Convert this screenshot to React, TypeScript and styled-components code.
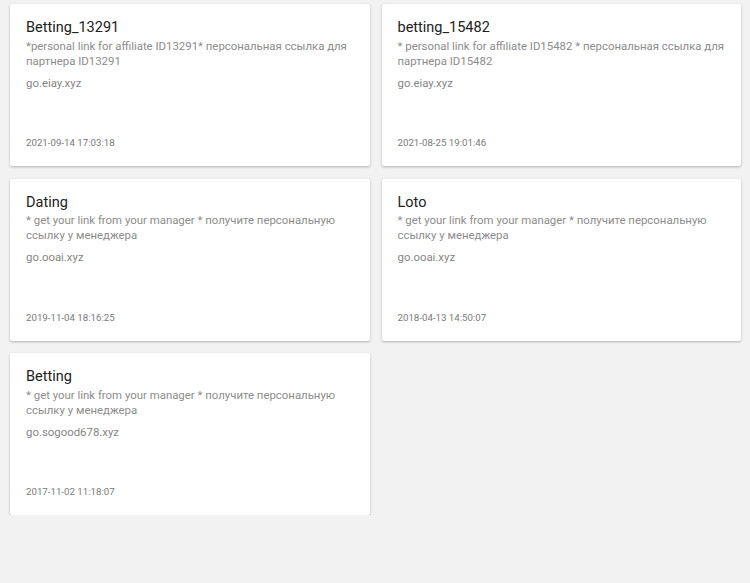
import styled, { createGlobalStyle } from 'styled-components';

const GlobalStyle = createGlobalStyle`
  html, body {
    margin: 0;
    padding: 0;
    background: #f2f2f2;
    font-family: Roboto, "Liberation Sans", sans-serif;
  }
`;

const Grid = styled.div`
  display: grid;
  grid-template-columns: 1fr 1fr;
  column-gap: 12px;
  row-gap: 12.5px;
  padding: 4px 9px 0 10px;
`;

const Card = styled.div`
  background: #fff;
  height: 162px;
  box-sizing: border-box;
  padding: 15px 12px 17px 16px;
  display: flex;
  flex-direction: column;
  border-radius: 2px;
  box-shadow: 0 1px 3px rgba(0, 0, 0, 0.18), 0 1px 2px rgba(0, 0, 0, 0.1);
`;

const Title = styled.div`
  font-size: 14.5px;
  line-height: 18px;
  color: #212121;
`;

const Description = styled.div`
  font-size: 11.4px;
  line-height: 15px;
  color: #8c8c8c;
  margin-top: 1.5px;
`;

const Link = styled.div`
  font-size: 11.4px;
  line-height: 15px;
  color: #858585;
  margin-top: 7px;
`;

const Date = styled.div`
  margin-top: auto;
  font-size: 9.7px;
  line-height: 12px;
  color: #7a7a7a;
`;

type Offer = {
  name: string;
  description: string;
  link: string;
  date: string;
};

const offers: Offer[] = [
  {
    name: 'Betting_13291',
    description: '*personal link for affiliate ID13291* персональная ссылка для партнера ID13291',
    link: 'go.eiay.xyz',
    date: '2021-09-14 17:03:18',
  },
  {
    name: 'betting_15482',
    description: '* personal link for affiliate ID15482 * персональная ссылка для партнера ID15482',
    link: 'go.eiay.xyz',
    date: '2021-08-25 19:01:46',
  },
  {
    name: 'Dating',
    description: '* get your link from your manager * получите персональную ссылку у менеджера',
    link: 'go.ooai.xyz',
    date: '2019-11-04 18:16:25',
  },
  {
    name: 'Loto',
    description: '* get your link from your manager * получите персональную ссылку у менеджера',
    link: 'go.ooai.xyz',
    date: '2018-04-13 14:50:07',
  },
  {
    name: 'Betting',
    description: '* get your link from your manager * получите персональную ссылку у менеджера',
    link: 'go.sogood678.xyz',
    date: '2017-11-02 11:18:07',
  },
];

function App() {
  return (
    <>
      <GlobalStyle />
      <Grid>
        {offers.map((offer) => (
          <Card key={offer.name}>
            <Title>{offer.name}</Title>
            <Description>{offer.description}</Description>
            <Link>{offer.link}</Link>
            <Date>{offer.date}</Date>
          </Card>
        ))}
      </Grid>
    </>
  );
}

export default App;
